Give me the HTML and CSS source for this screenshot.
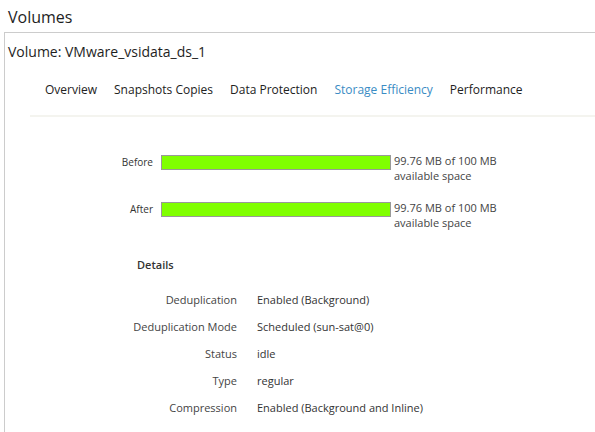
FILE: index.html
```html
<!DOCTYPE html>
<html>
<head>
<meta charset="utf-8">
<link rel="stylesheet" href="styles.css">
</head>
<body>
<h1 class="page-title">Volumes</h1>
<div class="panel">
  <h2 class="panel-title">Volume: VMware_vsidata_ds_1</h2>
  <nav class="tabs">
    <span class="tab">Overview</span>
    <span class="tab">Snapshots Copies</span>
    <span class="tab">Data Protection</span>
    <span class="tab active">Storage Efficiency</span>
    <span class="tab">Performance</span>
  </nav>
  <div class="usage">
    <div class="usage-row">
      <span class="usage-label">Before</span>
      <span class="bar"><span class="bar-fill" style="width:100%"></span></span>
      <span class="usage-text">99.76 MB of 100 MB<br>available space</span>
    </div>
    <div class="usage-row">
      <span class="usage-label">After</span>
      <span class="bar"><span class="bar-fill" style="width:100%"></span></span>
      <span class="usage-text">99.76 MB of 100 MB<br>available space</span>
    </div>
  </div>
  <h3 class="details-title">Details</h3>
  <dl class="details">
    <dt>Deduplication</dt><dd>Enabled (Background)</dd>
    <dt>Deduplication Mode</dt><dd>Scheduled (sun-sat@0)</dd>
    <dt>Status</dt><dd>idle</dd>
    <dt>Type</dt><dd>regular</dd>
    <dt>Compression</dt><dd>Enabled (Background and Inline)</dd>
  </dl>
</div>
</body>
</html>
```
FILE: styles.css
```css
html, body {
  margin: 0;
  padding: 0;
  background: #fff;
}
body {
  font-family: "Open Sans", "Liberation Sans", sans-serif;
  color: #333;
  overflow: hidden;
  height: 432px;
}
.page-title {
  margin: 7px 0 0 8px;
  font-size: 16px;
  line-height: 20px;
  font-weight: 400;
  color: #1e1e1e;
  height: 25px;
}
.panel {
  box-sizing: border-box;
  margin-left: 4px;
  border-top: 1px solid #ccc;
  border-left: 1px solid #ccc;
  height: 400px;
}
.panel-title {
  margin: 0;
  padding: 9px 0 0 3px;
  font-size: 14px;
  line-height: 20px;
  font-weight: 400;
  color: #1e1e1e;
}
.tabs {
  display: flex;
  gap: 17px;
  margin: 20px 0 0 25px;
  padding: 0 0 17px 15px;
  border-bottom: 2px solid #f4f4ef;
}
.tab {
  font-size: 12px;
  line-height: 16px;
  color: #222;
}
.tab.active {
  color: #3a8cc4;
}
.usage {
  display: flex;
  flex-direction: column;
  gap: 17px;
  margin-top: 36px;
}
.usage-row {
  display: flex;
  align-items: flex-start;
}
.usage-label {
  width: 148px;
  margin: 2px 8px 0 0;
  text-align: right;
  font-size: 10px;
  line-height: 15px;
  color: #333;
}
.bar {
  display: block;
  box-sizing: border-box;
  width: 230px;
  height: 15px;
  margin-top: 2px;
  border: 1px solid #999;
  background: #fff;
}
.bar-fill {
  display: block;
  height: 100%;
  background: #80ff00;
}
.usage-text {
  margin-left: 3px;
  font-size: 11px;
  line-height: 15px;
  color: #444;
}
.details-title {
  margin: 27px 0 0 132px;
  font-size: 11px;
  line-height: 15px;
  font-weight: 600;
  color: #333;
}
.details {
  display: grid;
  grid-template-columns: 232px auto;
  column-gap: 20px;
  row-gap: 12px;
  margin: 20px 0 0 0;
  font-size: 11px;
  line-height: 15px;
}
.details dt {
  text-align: right;
  color: #444;
}
.details dd {
  margin: 0;
  color: #333;
}
```
